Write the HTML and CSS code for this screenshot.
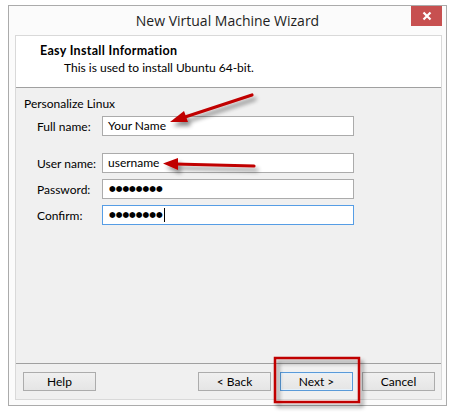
FILE: index.html
```html
<!DOCTYPE html>
<html>
<head>
<meta charset="utf-8">
<link rel="stylesheet" href="styles.css">
</head>
<body>
<div class="window">
  <div class="titlebar">
    <div class="title">New Virtual Machine Wizard</div>
    <div class="close">
      <svg width="10" height="10" viewBox="0 0 10 10"><path d="M1.5 1.5 L8.5 8.5 M8.5 1.5 L1.5 8.5" stroke="#fff" stroke-width="2.2"/></svg>
    </div>
  </div>
  <div class="client">
    <div class="header">
      <div class="h-title">Easy Install Information</div>
      <div class="h-sub">This is used to install Ubuntu 64-bit.</div>
    </div>
    <div class="content">
      <div class="group">Personalize Linux</div>
      <div class="row first"><label>Full name:</label><div class="input">Your Name</div></div>
      <div class="row gap"><label>User name:</label><div class="input">username</div></div>
      <div class="row"><label>Password:</label><div class="input dots">&#9679;&#9679;&#9679;&#9679;&#9679;&#9679;&#9679;&#9679;</div></div>
      <div class="row"><label>Confirm:</label><div class="input dots focus">&#9679;&#9679;&#9679;&#9679;&#9679;&#9679;&#9679;&#9679;<span class="caret"></span></div></div>
    </div>
    <div class="footer">
      <button class="btn">Help</button>
      <div class="spacer"></div>
      <button class="btn">&lt; Back</button>
      <button class="btn default">Next &gt;</button>
      <button class="btn">Cancel</button>
    </div>
  </div>
</div>
<svg class="annot" width="456" height="415" viewBox="0 0 456 415">
  <defs>
    <filter id="sh" x="-20%" y="-20%" width="140%" height="140%">
      <feGaussianBlur in="SourceAlpha" stdDeviation="2"/>
      <feOffset dx="3" dy="4" result="b"/>
      <feComponentTransfer><feFuncA type="linear" slope="0.45"/></feComponentTransfer>
      <feMerge><feMergeNode/><feMergeNode in="SourceGraphic"/></feMerge>
    </filter>
  </defs>
  <g filter="url(#sh)">
    <line x1="252" y1="95" x2="182" y2="118" stroke="#c00000" stroke-width="3.2" stroke-linecap="round"/>
    <polygon points="170,122 184,111 188,122" fill="#c00000"/>
    <line x1="254" y1="166" x2="175" y2="164" stroke="#c00000" stroke-width="3.2" stroke-linecap="round"/>
    <polygon points="163,163.5 178,158 178,170" fill="#c00000"/>
    <rect x="275" y="358" width="84" height="44" fill="none" stroke="#c00000" stroke-width="2.5"/>
  </g>
</svg>
</body>
</html>
```
FILE: styles.css
```css
html, body {
  margin: 0;
  padding: 0;
  background: #ffffff;
  font-family: Lato, "Liberation Sans", Arial, sans-serif;
  font-size: 12px;
  color: #000;
}
.window {
  position: relative;
  margin: 5px 0 0 8px;
  width: 437px;
  height: 399px;
  border: 1px solid #ababab;
  background: #fbfbfb;
  box-sizing: content-box;
}
.titlebar {
  height: 29px;
  display: flex;
  align-items: center;
  justify-content: center;
  position: relative;
}
.title {
  font-family: "Open Sans", "Liberation Sans", sans-serif;
  font-size: 14px;
  color: #1e1e1e;
}
.close {
  position: absolute;
  right: 4px;
  top: 0;
  width: 31px;
  height: 20px;
  background: #c75050;
  display: flex;
  align-items: center;
  justify-content: center;
}
.client {
  margin-left: 6px;
  width: 425px;
  height: 363px;
  border: 1px solid #d9d9d9;
  background: #f0f0f0;
  display: flex;
  flex-direction: column;
}
.header {
  height: 52px;
  background: #ffffff;
  border-bottom: 1px solid #a0a0a0;
  box-sizing: border-box;
  padding: 7px 0 0 24px;
}
.h-title {
  font-weight: bold;
  font-size: 12.5px;
  letter-spacing: 0.3px;
  height: 15px;
  line-height: 15px;
}
.h-sub {
  padding-left: 24px;
  height: 15px;
  line-height: 15px;
  margin-top: 2px;
}
.content {
  flex: 1;
  padding: 9px 0 0 8px;
  border-bottom: 1px solid #a0a0a0;
}
.group {
  height: 14px;
  line-height: 14px;
}
.row {
  display: flex;
  align-items: center;
  height: 20px;
  margin-top: 6px;
}
.row.first { margin-top: 5px; }
.row.gap { margin-top: 17px; }
.row label {
  width: 65px;
  padding-left: 13px;
}
.input {
  height: 18px;
  border: 1px solid #ababab;
  background: #fff;
  line-height: 18px;
  padding-left: 5px;
  box-sizing: content-box;
  width: 245px;
}
.input.focus { border-color: #569de5; }
.dots {
  font-size: 7.7px;
  font-family: "DejaVu Sans", sans-serif;
  padding-left: 6px;
  width: 244px;
}
.caret {
  display: inline-block;
  width: 1px;
  height: 14px;
  background: #000;
  vertical-align: middle;
  margin-left: 1px;
}
.footer {
  height: 35px;
  display: flex;
  align-items: center;
  padding: 0 6px 0 7px;
}
.spacer { flex: 1; }
.btn {
  width: 73px;
  height: 19px;
  margin-left: 9px;
  border: 1px solid #acacac;
  background: linear-gradient(#f0f0f0, #e5e5e5);
  font-family: Lato, "Liberation Sans", Arial, sans-serif;
  font-size: 12px;
  color: #000;
  padding: 0;
  box-sizing: border-box;
}
.btn:first-child { margin-left: 0; }
.btn.default { border-color: #5a9ad8; box-shadow: inset 0 0 0 1px #e5f1fb; }
.annot {
  position: absolute;
  left: 0;
  top: 0;
  pointer-events: none;
}
```
